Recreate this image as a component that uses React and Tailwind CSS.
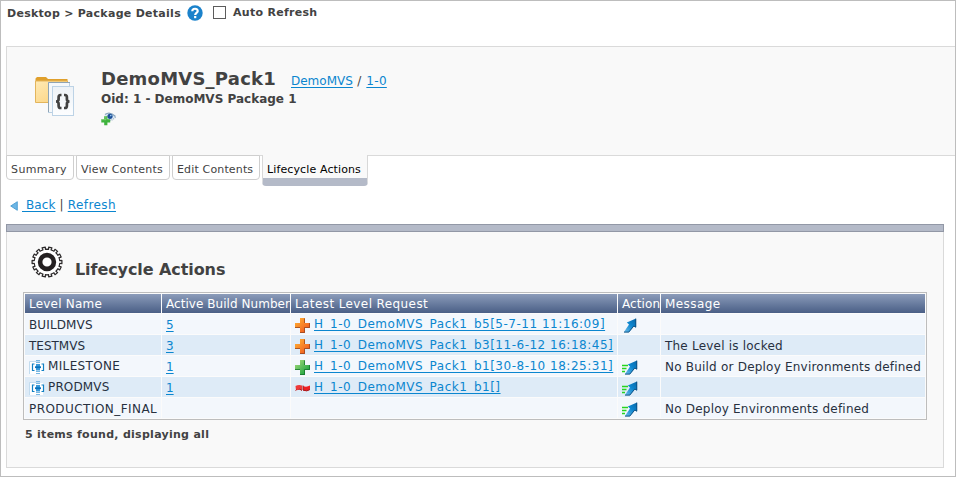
const FONT = "font-[Verdana,'DejaVu_Sans',sans-serif]";

function HelpIcon() {
  return (
    <svg width="16" height="16" viewBox="0 0 16 16" className="shrink-0">
      <circle cx="8" cy="8" r="7.7" fill="#1b82cb" />
      <path d="M5.3 6.2C5.3 2.9 10.9 3 10.7 6.1C10.6 8 8.2 7.8 8.2 10" fill="none" stroke="#fff" strokeWidth="2.2" />
      <rect x="7.1" y="11" width="2.2" height="2.2" fill="#fff" />
    </svg>
  );
}

function FolderIcon() {
  return (
    <svg width="40" height="41" viewBox="0 0 40 41" className="shrink-0">
      <defs>
        <linearGradient id="fold" x1="0" y1="0" x2="1" y2="1">
          <stop offset="0" stopColor="#ffeab5" />
          <stop offset="1" stopColor="#fbd078" />
        </linearGradient>
        <linearGradient id="page" x1="0" y1="0" x2="0" y2="1">
          <stop offset="0" stopColor="#edf2f7" />
          <stop offset="1" stopColor="#fdfeff" />
        </linearGradient>
      </defs>
      <path d="M0.5 25V1.500L2 0H11L13 2H32.5V25Z" fill="#e0a02c" />
      <path d="M0.5 4H32.5V25.5H0.5Z" fill="url(#fold)" stroke="#e3b55c" />
      <rect x="13.5" y="5.5" width="21" height="30" fill="#f5f8fb" stroke="#b9cfe2" />
      <path d="M13.500 35V5.500H35" fill="none" stroke="#8fa4b5" />
      <rect x="17.5" y="9.5" width="21" height="29" fill="url(#page)" stroke="#bdd3e6" />
      <path d="M26.500 18H25.500Q23.600 18 23.600 20.300V22.300Q23.600 24.500 21 24.500Q23.600 24.500 23.600 26.700V28.700Q23.600 31 25.500 31H26.500M29 18H30Q31.900 18 31.900 20.300V22.300Q31.900 24.500 34.500 24.500Q31.900 24.500 31.900 26.700V28.700Q31.900 31 30 31H29" fill="none" stroke="#424242" strokeWidth="2.700" />
    </svg>
  );
}

function WatchIcon() {
  return (
    <svg width="16" height="14" viewBox="0 0 16 14">
      <path d="M3 4Q8-1 14.5 4.500Q10 10 4 7Z" fill="#dce9f5" />
      <path d="M4 2.500Q9-1 14.500 4.500" fill="none" stroke="#86a3bd" strokeWidth="1.300" />
      <path d="M14.500 5Q12 8 8.500 8.500" fill="none" stroke="#9fb4c7" strokeDasharray="1 1" strokeWidth="1.500" />
      <circle cx="9" cy="4.300" r="2.600" fill="#1c4f97" />
      <circle cx="9.800" cy="3.600" r="0.800" fill="#9fd0f5" />
      <path d="M3.200 4.300H6.400V7.200H9.200V10.400H6.400V13.300H3.200V10.400H0.300V7.200H3.200Z" fill="#3fb33d" />
      <path d="M3.600 4.800H5V7.700H0.700" fill="none" stroke="#8bd17e" strokeWidth="0.800" />
    </svg>
  );
}

function GearIcon() {
  const teeth = 14;
  const pts = [];
  for (let i = 0; i < teeth; i++) {
    [[-0.5, 12.8], [-0.22, 12.8], [-0.25, 15], [0.25, 15], [0.22, 12.8]].forEach(([o, r]) => {
      const a = ((i + 0.5 + o) / teeth) * Math.PI * 2;
      pts.push(`${(16 + r * Math.sin(a)).toFixed(2)},${(16 - r * Math.cos(a)).toFixed(2)}`);
    });
  }
  return (
    <svg width="32" height="32" viewBox="0 0 32 32" className="shrink-0">
      <polygon points={pts.join(" ")} fill="#fff" stroke="#2b2829" strokeWidth="1.200" strokeLinejoin="round" />
      <circle cx="16" cy="16" r="6.900" fill="#fff" stroke="#242021" strokeWidth="4.600" />
    </svg>
  );
}

function PlusIcon({ green }) {
  const id = green ? "plus-green" : "plus-orange";
  return (
    <svg width="16" height="16" viewBox="0 0 16 16" className="shrink-0">
      <defs>
        <linearGradient id={id} x1="0" y1="0" x2="1" y2="1">
          <stop offset="0.1" stopColor={green ? "#9bd676" : "#ffad32"} />
          <stop offset="0.9" stopColor={green ? "#12a03b" : "#f0561f"} />
        </linearGradient>
      </defs>
      <path d="M5 1H10V6H15V11H10V16H5V11H0V6H5Z" fill={`url(#${id})`} />
      <path d="M9.500 1.500V6M14.500 6V10.500H9.500V15.500H5M0 10.500H5" fill="none" stroke={green ? "#176f2c" : "#8f4523"} strokeOpacity="0.75" />
    </svg>
  );
}

function FlagIcon() {
  return (
    <svg width="16" height="16" viewBox="0 0 16 16" className="shrink-0">
      <path d="M0.500 6Q3.500 4.500 7 5.500V10.500L4.500 9.500L1 10.500Z" fill="#ef3a3a" />
      <path d="M8 6Q11.500 7.500 15 5.500V9.500Q12 12 8 10.500Z" fill="#ee2024" />
      <path d="M0.500 10.500L1.500 9.500M3.500 10L4.500 9L7 10.500M8 5.500V10Q12 12 15 9.500" fill="none" stroke="#a51d20" />
    </svg>
  );
}

function ArrowIcon({ fast }) {
  const id = fast ? "arrow-fast" : "arrow";
  return (
    <svg width="16" height="16" viewBox="0 0 16 16" className="shrink-0">
      <defs>
        <linearGradient id={id} x1="1" y1="0" x2="0" y2="1">
          <stop offset="0" stopColor="#0867a8" />
          <stop offset="0.45" stopColor="#0d86cf" />
          <stop offset="1" stopColor="#72bfea" />
        </linearGradient>
      </defs>
      {fast && <path d="M0 6.500H6M0 9.500H4.500M0 12.500H3" stroke="#27d51f" strokeWidth="1.700" />}
      <g transform={fast ? "translate(1 0.5)" : "translate(0 0.5)"}>
        <path d="M1.800 14.800L7 7L4.800 5L14 1V10L11.800 8.800L7 14.800Z" fill={`url(#${id})`} />
        <path d="M13.800 1.200V9.700L11.800 8.500L6.800 14.600H2" fill="none" stroke="#0b4b7c" strokeWidth="0.900" />
      </g>
    </svg>
  );
}

function MilestoneIcon() {
  return (
    <svg width="16" height="16" viewBox="0 0 16 16" className="shrink-0">
      <path d="M0.500 15V2.500H11" fill="none" stroke="#c3dcef" />
      <rect x="1" y="3" width="13" height="12" fill="#fff" />
      <path d="M5.500 5H3.500V11.500H5.500M12.500 5H14.500V11.500H12.500" fill="none" stroke="#1180c4" strokeWidth="1.200" />
      <path d="M7 1.500H11M7 3.500H11M7 12.500H11M7 14.500H11" stroke="#78b7e2" />
      <rect x="7" y="5" width="4" height="6.500" fill="#3a9ad9" />
      <path d="M6 8.200H12" stroke="#0873bd" strokeWidth="1.800" />
    </svg>
  );
}

function Link({ children, className = "" }) {
  return (
    <a href="#" className={`whitespace-pre text-[#0b86cf] underline decoration-1 underline-offset-2 ${className}`}>
      {children}
    </a>
  );
}

const rows = [
  { name: "BUILDMVS", spacing: "tracking-[0.12px]", build: "5", icon: "orange", request: "H_1-0_DemoMVS_Pack1_b5[5-7-11 11:16:09]", action: "run" },
  { name: "TESTMVS", spacing: "tracking-normal", build: "3", icon: "orange", request: "H_1-0_DemoMVS_Pack1_b3[11-6-12 16:18:45]", message: "The Level is locked" },
  { name: "MILESTONE", spacing: "tracking-[0.35px]", milestone: true, build: "1", icon: "green", request: "H_1-0_DemoMVS_Pack1_b1[30-8-10 18:25:31]", action: "fast", message: "No Build or Deploy Environments defined" },
  { name: "PRODMVS", spacing: "tracking-[0.15px]", milestone: true, build: "1", icon: "flag", request: "H_1-0_DemoMVS_Pack1_b1[]", action: "fast" },
  { name: "PRODUCTION_FINAL", spacing: "tracking-[0.45px]", action: "fast", message: "No Deploy Environments defined" },
];

const headers = [
  { label: "Level Name", spacing: "tracking-[0.22px]" },
  { label: "Active Build Number", spacing: "tracking-[0.05px]" },
  { label: "Latest Level Request", spacing: "tracking-[0.4px]" },
  { label: "Action", spacing: "tracking-[0.1px]" },
  { label: "Message", spacing: "tracking-[0.42px]" },
];

const GRID = "grid grid-cols-[136px_128px_326px_42px_264px] gap-px";

function Row({ row, index }) {
  const cell = `flex h-5 items-center whitespace-nowrap pl-1 ${index % 2 ? "bg-[#deebf7]" : "bg-[#f3f7fc]"}`;
  return (
    <div className={GRID}>
      <div className={cell}>
        {row.milestone && <span className="mr-[3px] pt-[2px]"><MilestoneIcon /></span>}
        <span className={`${row.spacing} ${row.milestone ? "" : "pt-0.5"}`}>{row.name}</span>
      </div>
      <div className={cell}>{row.build && <Link className="pt-0.5">{row.build}</Link>}</div>
      <div className={cell}>
        {row.icon && (
          <>
            <span className="mr-[3px] pt-px">
              {row.icon === "flag" ? <FlagIcon /> : <PlusIcon green={row.icon === "green"} />}
            </span>
            <Link className="tracking-[0.51px]">{row.request}</Link>
          </>
        )}
      </div>
      <div className={cell}>
        {row.action && <span className="pt-0.5"><ArrowIcon fast={row.action === "fast"} /></span>}
      </div>
      <div className={cell}><span className="pt-0.5 tracking-[0.21px]">{row.message}</span></div>
    </div>
  );
}

function Tab({ label, className }) {
  return (
    <div className={`mr-0.5 h-[25px] rounded-b border border-[#cfcfcf] bg-white pl-1 pt-[7px] text-[11px] leading-[14px] text-[#424242] whitespace-nowrap ${className}`}>
      {label}
    </div>
  );
}

export default function App() {
  return (
    <div className={`${FONT} h-[477px] w-[956px] overflow-hidden border border-[#bdbdbd] bg-white text-[13px] leading-4 text-[#424242]`}>
      <div className="flex h-[45px] items-start pl-1.5 pt-1 text-[11px] font-bold tracking-[0.28px]">
        <span className="w-[180px] pt-px whitespace-nowrap">Desktop &gt; Package Details</span>
        <HelpIcon />
        <span className="ml-[10px] mt-px size-[13px] border border-[#5c5c5c] bg-white" />
        <span className="ml-[7px] whitespace-nowrap">Auto Refresh</span>
      </div>

      <div className="ml-[5px] flex h-[110px] border border-r-0 border-[#dadada] bg-[#f9f9f9]">
        <div className="ml-7 mt-[30px]"><FolderIcon /></div>
        <div className="ml-[26px] mt-5">
          <div className="flex h-6 items-baseline whitespace-nowrap">
            <span className="w-[190px] text-[18px] font-bold leading-6 tracking-[0.22px]">DemoMVS_Pack1</span>
            <span className="text-[12px]">
              <Link>DemoMVS</Link>
              <span className="whitespace-pre tracking-[0.6px]"> / </span>
              <Link className="tracking-[0.3px]">1-0</Link>
            </span>
          </div>
          <div className="text-[12px] font-bold leading-4">Oid: 1 - DemoMVS Package 1</div>
          <div className="mt-[5px]"><WatchIcon /></div>
        </div>
      </div>

      <div className="-mt-px ml-[5px] flex h-[35px] items-start">
        <Tab label="Summary" className="w-[68px] tracking-[0.4px]" />
        <Tab label="View Contents" className="w-[94px] tracking-[0.22px]" />
        <Tab label="Edit Contents" className="w-[88px] tracking-[0.15px]" />
        <div className="h-[31px] w-[106px] rounded-b border-x border-b-[8px] border-x-[#d8d8d8] border-b-[#b4bac8] bg-[#f9f9f9] pl-1 pt-2 text-[11px] leading-[14px] tracking-[0.12px] text-black whitespace-nowrap">
          Lifecycle Actions
        </div>
      </div>

      <div className="flex h-[34px] items-start pl-[9px] pt-[7px] text-[12px]">
        <svg width="8" height="10" viewBox="0 0 8 10" className="mr-1 mt-1">
          <path d="M7.300 0.700V9.300L0.700 5Z" fill="#6db6e5" stroke="#3c94cd" strokeWidth="0.800" />
        </svg>
        <Link className="tracking-[0.1px]"> Back</Link>
        <span className="whitespace-pre tracking-[0.2px]"> | </span>
        <Link className="tracking-[0.42px]">Refresh</Link>
      </div>

      <div className="ml-[5px] h-2 w-[938px] border border-[#9298a6] bg-[#b4bac8]" />
      <div className="ml-[5px] h-[236px] w-[938px] border border-t-0 border-[#dadada] bg-[#f9f9f9] pl-4">
        <div className="flex h-[60px] pl-2">
          <div className="mt-[14px]"><GearIcon /></div>
          <div className="ml-3 mt-[27px] text-[16px] font-bold leading-[22px] tracking-[-0.08px] whitespace-nowrap">Lifecycle Actions</div>
        </div>
        <div className="flex h-[128px] w-[904px] flex-col gap-px border border-[#bdbdbd] bg-[#fbfbfb] p-px text-[12px] text-[#27303f]">
          <div className={`${GRID} text-white`}>
            {headers.map((h) => (
              <div key={h.label} className={`h-[19px] whitespace-nowrap bg-linear-to-b from-[#8c9cba] to-[#4a5f86] pl-1 pt-px leading-[19px] ${h.spacing}`}>{h.label}</div>
            ))}
          </div>
          {rows.map((r, i) => <Row key={r.name} row={r} index={i} />)}
        </div>
        <div className="mt-[7px] pl-0.5 text-[11px] font-bold tracking-[0.28px]">5 items found, displaying all</div>
      </div>
    </div>
  );
}
